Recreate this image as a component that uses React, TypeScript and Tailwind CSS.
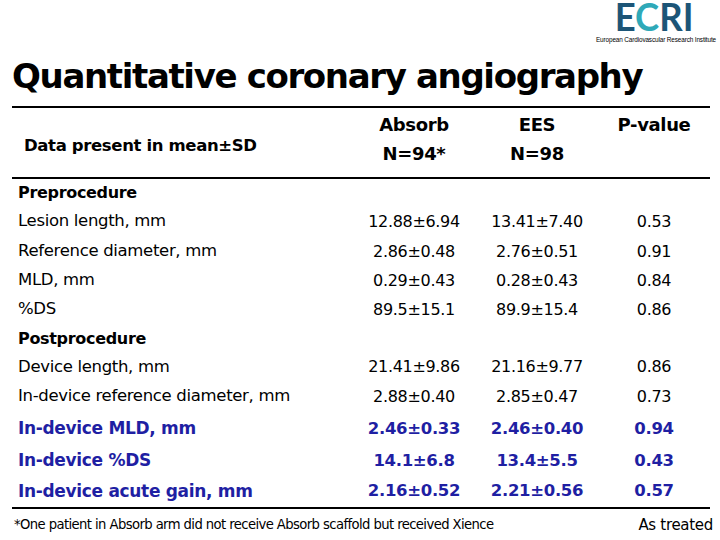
import React from "react";

type Row = { label: string; a: string; b: string; p: string; h: string; blue?: boolean };

const pre: Row[] = [
  { label: "Lesion length, mm", a: "12.88±6.94", b: "13.41±7.40", p: "0.53", h: "h-[31px]" },
  { label: "Reference diameter, mm", a: "2.86±0.48", b: "2.76±0.51", p: "0.91", h: "h-[29px]" },
  { label: "MLD, mm", a: "0.29±0.43", b: "0.28±0.43", p: "0.84", h: "h-[29px]" },
  { label: "%DS", a: "89.5±15.1", b: "89.9±15.4", p: "0.86", h: "h-[29px]" },
];

const post: Row[] = [
  { label: "Device length, mm", a: "21.41±9.86", b: "21.16±9.77", p: "0.86", h: "h-[28px]" },
  { label: "In-device reference diameter, mm", a: "2.88±0.40", b: "2.85±0.47", p: "0.73", h: "h-[31px]" },
  { label: "In-device MLD, mm", a: "2.46±0.33", b: "2.46±0.40", p: "0.94", h: "h-[34px]", blue: true },
  { label: "In-device %DS", a: "14.1±6.8", b: "13.4±5.5", p: "0.43", h: "h-[30px]", blue: true },
  { label: "In-device acute gain, mm", a: "2.16±0.52", b: "2.21±0.56", p: "0.57", h: "h-[31px]", blue: true },
];

function DataRow({ r }: { r: Row }) {
  const base = r.blue ? "font-bold text-[#1f1fa3]" : "text-black";
  const labelSize = r.blue ? "text-[17px]" : "text-[16.5px]";
  const valSize = r.blue ? "text-[16.5px]" : "text-[16px]";
  return (
    <div
      className={`grid grid-cols-[340px_124px_122px_112px] items-center tracking-[-0.02em] ${r.h} ${base}`}
    >
      <div className={`pl-[6px] whitespace-nowrap ${labelSize}`}>{r.label}</div>
      <div className={`text-center whitespace-nowrap ${valSize}`}>{r.a}</div>
      <div className={`text-center whitespace-nowrap ${valSize}`}>{r.b}</div>
      <div className={`text-center whitespace-nowrap ${valSize}`}>{r.p}</div>
    </div>
  );
}

export default function App() {
  return (
    <div
      className="w-[720px] h-[540px] bg-white overflow-hidden text-black"
      style={{ fontFamily: '"DejaVu Sans", Verdana, sans-serif' }}
    >
      {/* Logo */}
      <div className="flex justify-end pr-[3px] h-[50px]">
        <div className="flex flex-col items-center w-[122px]">
          <div
            className="text-[38px] leading-[32px] font-bold scale-x-[0.96] mr-[4px]"
            style={{ fontFamily: "Lato, sans-serif" }}
          >
            <span className="text-[#1c5577]">E</span>
            <span className="text-[#2fa9b8]">C</span>
            <span className="text-[#1c5577]">RI</span>
          </div>
          <div
            className="mt-[4px] text-[6.4px] leading-[8px] text-black whitespace-nowrap tracking-[-0.02em]"
            style={{ fontFamily: '"Liberation Sans", sans-serif' }}
          >
            European Cardiovascular Research Institute
          </div>
        </div>
      </div>

      {/* Title */}
      <div className="pl-[12px] h-[56px] pt-[9px]">
        <h1 className="text-[34px] font-bold tracking-[-0.04em] whitespace-nowrap leading-none">
          Quantitative coronary angiography
        </h1>
      </div>

      {/* Table */}
      <div className="mx-[12px] w-[698px]">
        <div className="border-t-2 border-black" />
        <div className="grid grid-cols-[340px_124px_122px_112px] h-[69px] font-bold text-[18px] tracking-[-0.02em]">
          <div className="pl-[12px] flex items-center pt-[7px] text-[16.5px]">Data present in mean±SD</div>
          <div className="flex flex-col items-center pt-[2px] leading-[29px]">
            <span>Absorb</span>
            <span>N=94*</span>
          </div>
          <div className="flex flex-col items-center pt-[2px] leading-[29px]">
            <span>EES</span>
            <span>N=98</span>
          </div>
          <div className="flex flex-col items-center pt-[2px] leading-[29px]">
            <span>P-value</span>
          </div>
        </div>
        <div className="border-t-2 border-black" />

        <div className="h-[27px] flex items-center pl-[6px] font-bold text-[16px] tracking-[-0.02em]">
          Preprocedure
        </div>
        {pre.map((r) => (
          <DataRow key={r.label} r={r} />
        ))}
        <div className="h-[29px] flex items-center pl-[6px] font-bold text-[16px] tracking-[-0.02em]">
          Postprocedure
        </div>
        {post.map((r) => (
          <DataRow key={r.label} r={r} />
        ))}
        <div className="border-t-2 border-black" />
        <div className="flex justify-between items-center h-[32px]">
          <span className="pl-[2px] text-[13.2px] tracking-[-0.045em] whitespace-nowrap">
            *One patient in Absorb arm did not receive Absorb scaffold but received Xience
          </span>
          <span className="text-[15px] tracking-[-0.02em] mr-[-3px] whitespace-nowrap">As treated</span>
        </div>
      </div>
    </div>
  );
}
